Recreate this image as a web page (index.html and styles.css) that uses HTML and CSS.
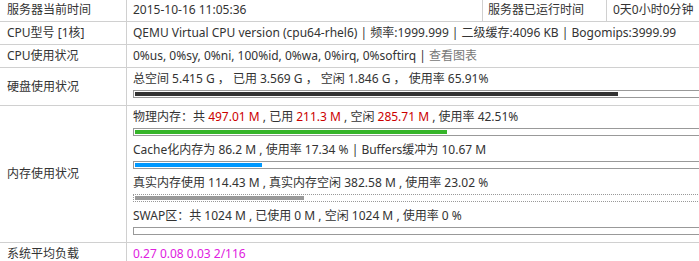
FILE: index.html
```html
<!DOCTYPE html>
<html lang="zh-CN">
<head>
<meta charset="utf-8">
<title>服务器信息</title>
<link rel="stylesheet" href="styles.css">
</head>
<body>
<table class="probe">
  <colgroup>
    <col class="c1"><col class="c2"><col class="c3"><col class="c4">
  </colgroup>
  <tr>
    <td class="lbl">服务器当前时间</td>
    <td>2015-10-16 11:05:36</td>
    <td class="lbl2">服务器已运行时间</td>
    <td>0天0小时0分钟</td>
  </tr>
  <tr>
    <td class="lbl">CPU型号 [1核]</td>
    <td colspan="3">QEMU Virtual CPU version (cpu64-rhel6) | 频率:1999.999 | 二级缓存:4096 KB | Bogomips:3999.99</td>
  </tr>
  <tr>
    <td class="lbl">CPU使用状况</td>
    <td colspan="3">0%us, 0%sy, 0%ni, 100%id, 0%wa, 0%irq, 0%softirq | <a class="link" href="#">查看图表</a></td>
  </tr>
  <tr>
    <td class="lbl">硬盘使用状况</td>
    <td colspan="3" class="block">总空间 5.415 G ， 已用 3.569 G ， 空闲 1.846 G ， 使用率 65.91%
      <div class="bar"><div class="fill black" style="width:65.91%"></div></div>
    </td>
  </tr>
  <tr>
    <td class="lbl">内存使用状况</td>
    <td colspan="3" class="block">
      <div class="line">物理内存：共 <span class="red">497.01 M</span> , 已用 <span class="red">211.3 M</span> , 空闲 <span class="red">285.71 M</span> , 使用率 42.51%</div>
      <div class="bar"><div class="fill green" style="width:42.51%"></div></div>
      <div class="line">Cache化内存为 86.2 M , 使用率 17.34 % | Buffers缓冲为 10.67 M</div>
      <div class="bar"><div class="fill blue" style="width:17.34%"></div></div>
      <div class="line">真实内存使用 114.43 M , 真实内存空闲 382.58 M , 使用率 23.02 %</div>
      <div class="bar dotted"><div class="fill gray" style="width:23.02%"></div></div>
      <div class="line">SWAP区：共 1024 M , 已使用 0 M , 空闲 1024 M , 使用率 0 %</div>
      <div class="bar"><div class="fill gray" style="width:0%"></div></div>
    </td>
  </tr>
  <tr>
    <td class="lbl">系统平均负载</td>
    <td colspan="3" class="load">0.27 0.08 0.03 2/116</td>
  </tr>
</table>
</body>
</html>
```
FILE: styles.css
```css
html, body {
  margin: 0;
  padding: 0;
  overflow: hidden;
  background: #fff;
}
body {
  font-family: "Noto Sans", "Noto Sans CJK SC", sans-serif;
  font-size: 12px;
  line-height: 18px;
  color: #333;
}
.probe {
  border-collapse: collapse;
  table-layout: fixed;
  width: 880px;
  margin: -2px 0 0 -1px;
}
.c1 { width: 127px; }
.c2 { width: 356px; }
.c3 { width: 124px; }
.c4 { width: auto; }
.probe td {
  border: 1px solid #d0d0d0;
  padding: 2px 6px;
  vertical-align: middle;
  white-space: nowrap;
}
.probe td.lbl { padding-left: 7px; }
.probe td.lbl2 { padding-left: 5px; }
.link { color: #777; text-decoration: none; }
.red { color: #cc0000; }
.load { color: #e020e0; }
.bar {
  width: 733px;
  height: 4px;
  padding: 1px;
  border: 1px solid #999;
  background: #fff;
  margin: 2px 0 5px 0;
  overflow: hidden;
}
.bar.dotted { border-style: dotted; }
.fill { height: 4px; }
.black { background: #333; }
.green { background: #36b52a; }
.blue { background: #0099ff; }
.gray { background: #999; }
```
